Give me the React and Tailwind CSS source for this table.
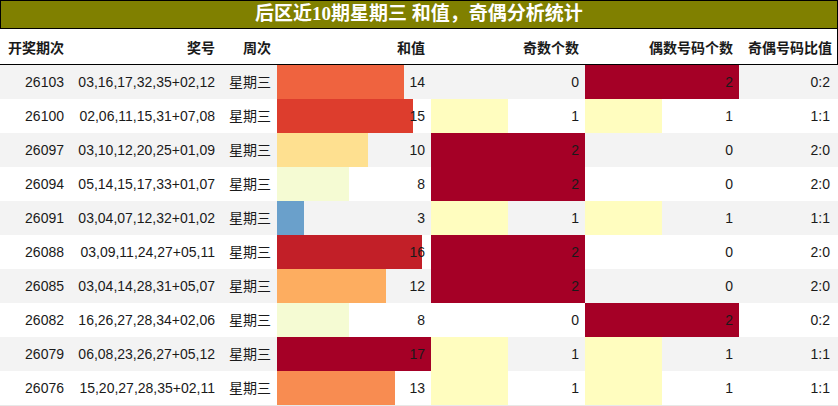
import React from 'react';

const rows = [
  ['26103', '03,16,17,32,35+02,12', 14, 0, 2, '0:2'],
  ['26100', '02,06,11,15,31+07,08', 15, 1, 1, '1:1'],
  ['26097', '03,10,12,20,25+01,09', 10, 2, 0, '2:0'],
  ['26094', '05,14,15,17,33+01,07', 8, 2, 0, '2:0'],
  ['26091', '03,04,07,12,32+01,02', 3, 1, 1, '1:1'],
  ['26088', '03,09,11,24,27+05,11', 16, 2, 0, '2:0'],
  ['26085', '03,04,14,28,31+05,07', 12, 2, 0, '2:0'],
  ['26082', '16,26,27,28,34+02,06', 8, 0, 2, '0:2'],
  ['26079', '06,08,23,26,27+05,12', 17, 1, 1, '1:1'],
  ['26076', '15,20,27,28,35+02,11', 13, 1, 1, '1:1'],
];

const sumColors = {
  3: '#6aa0cb', 8: '#f5fbd3', 10: '#fee090', 12: '#fdad60', 13: '#f88c51',
  14: '#ef633f', 15: '#dd3d2d', 16: '#c21f28', 17: '#a50026',
};
const countColors = { 1: '#fffdbf', 2: '#a50026' };

// bar drawn as a background gradient, width from the value
function barStyle(color, width) {
  if (!width) return undefined;
  return { background: `linear-gradient(to right, ${color} ${width}px, transparent ${width}px)` };
}

const cell = 'flex items-center justify-end pr-[6px] whitespace-nowrap';

export default function App() {
  return (
    <div className="w-[838px] h-[406px] bg-white text-[14px] text-[#1a1a1a] font-['Liberation_Sans','Noto_Sans_CJK_SC',sans-serif]">
      <div className="h-[29px] border border-black bg-[#808000] flex items-center justify-center text-white font-bold text-[19px] font-['Liberation_Serif','Noto_Sans_CJK_SC',sans-serif]">
        后区近10期星期三 和值，奇偶分析统计
      </div>
      <div className="grid grid-cols-[70px_151px_56px_154px_154px_154px_99px] h-[36px] border-b border-r border-black font-bold pt-[4px]">
        <div className={cell}>开奖期次</div>
        <div className={cell}>奖号</div>
        <div className={cell}>周次</div>
        <div className={cell}>和值</div>
        <div className={cell}>奇数个数</div>
        <div className={cell}>偶数号码个数</div>
        <div className={cell}>奇偶号码比值</div>
      </div>
      <div className="border-b border-[#e8e8e8]">
        {rows.map(([issue, nums, sum, odd, even, ratio], i) => (
          <div
            key={issue}
            className={`grid grid-cols-[70px_151px_56px_154px_154px_154px_99px] h-[34px] ${i % 2 === 0 ? 'bg-[#f3f3f3]' : 'bg-white'}`}
          >
            <div className={`${cell} pt-[1px]`}>{issue}</div>
            <div className={`${cell} pt-[1px]`}>{nums}</div>
            <div className={`${cell} pt-[1px]`}>星期三</div>
            <div className={`${cell} pt-[1px]`} style={barStyle(sumColors[sum], Math.round((sum / 17) * 154))}>{sum}</div>
            <div className={`${cell} pt-[1px]`} style={barStyle(countColors[odd], odd * 77)}>{odd}</div>
            <div className={`${cell} pt-[1px]`} style={barStyle(countColors[even], even * 77)}>{even}</div>
            <div className={`${cell} pt-[1px] pr-[8px]`}>{ratio}</div>
          </div>
        ))}
      </div>
    </div>
  );
}
